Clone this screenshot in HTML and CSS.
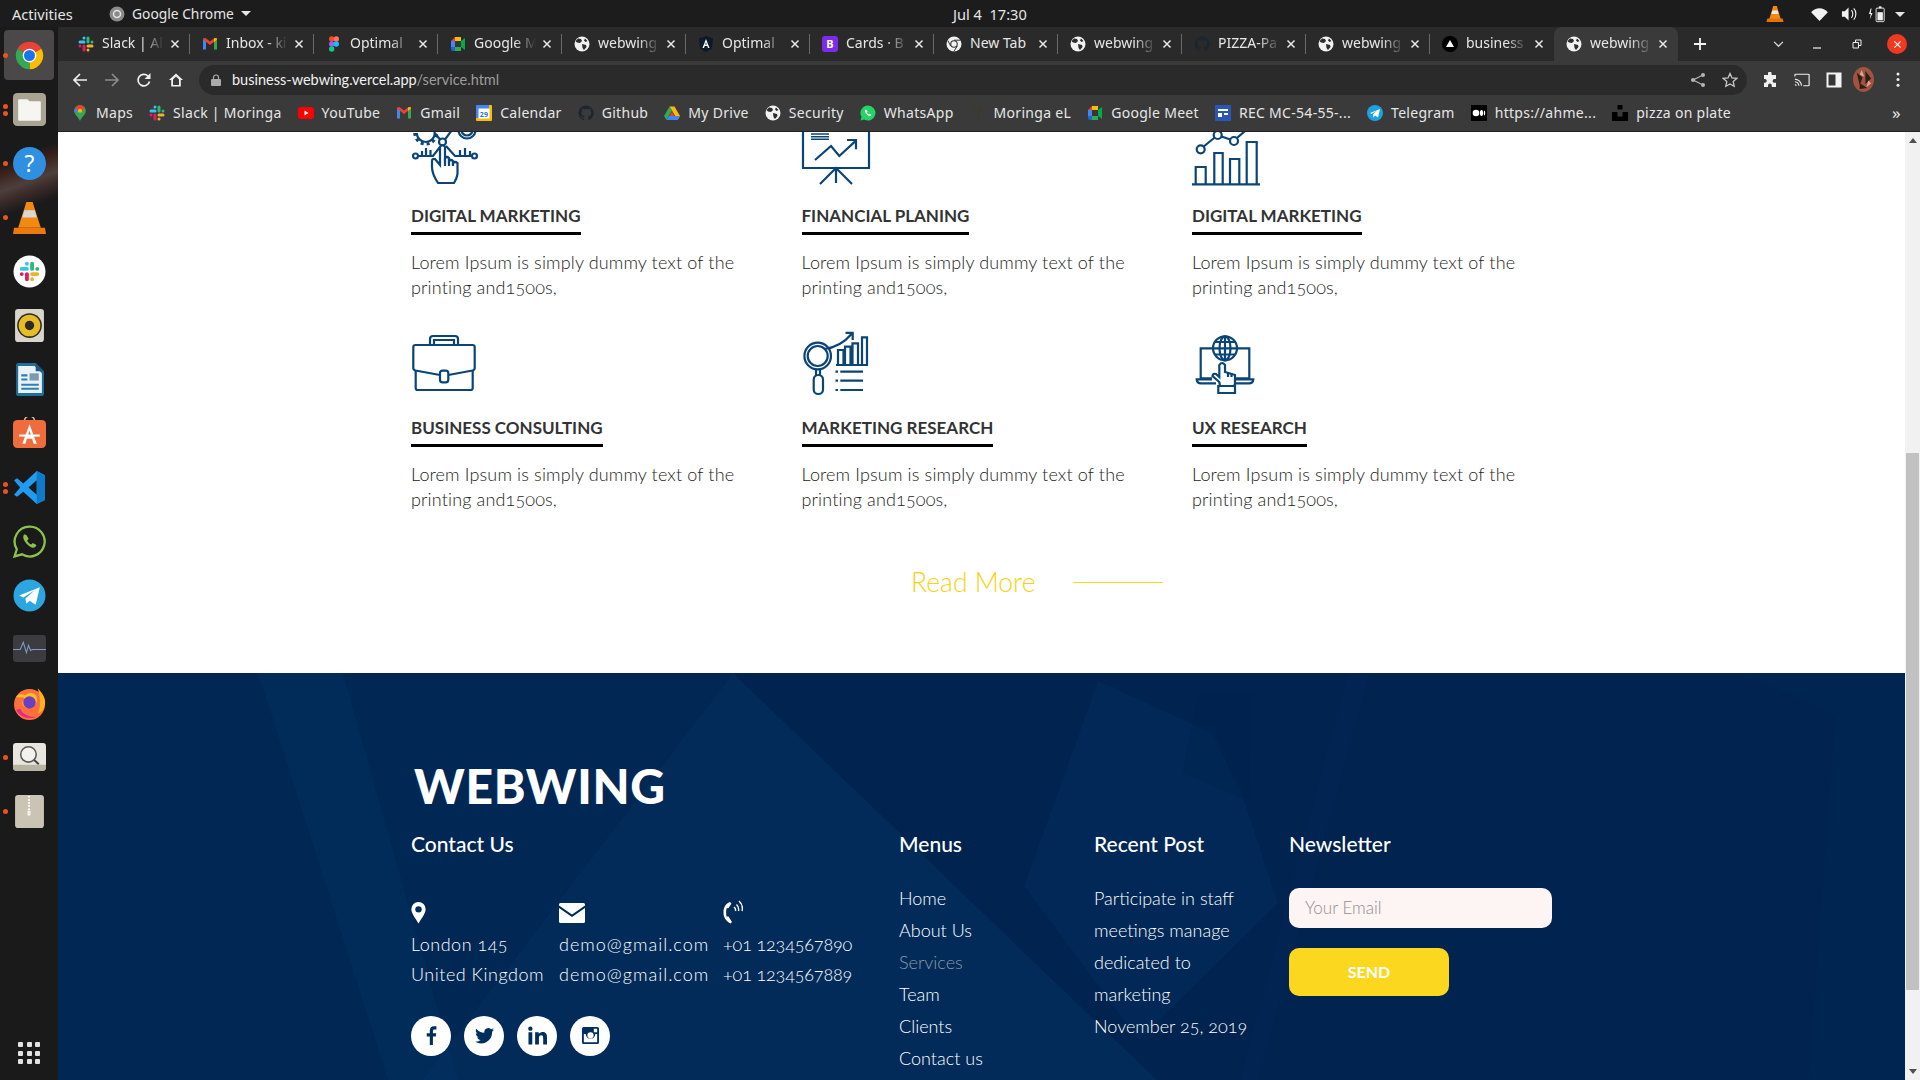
FILE: index.html
```html
<!DOCTYPE html>
<html lang="en">
<head>
    <meta charset="UTF-8">
    <title>Webwing - Services</title>
    <link rel="stylesheet" href="styles.css">
</head>
<body>
    <!-- shared icons -->
    <svg class="defs" width="0" height="0">
        <symbol id="i-x" viewBox="0 0 10 10"><path d="M1.5 1.5l7 7M8.5 1.5l-7 7" stroke="#e8e8e8" stroke-width="1.5" fill="none"/></symbol>
        <symbol id="i-globe" viewBox="0 0 16 16"><circle cx="8" cy="8" r="7.5" fill="#f1f1f1"/><path d="M4 2.500l3 .5 1 2-2 2-3-.5-1.500-1.500zM8 8l4 1 .5 2-2.500 3-1.500-2zM11 2.500l2.500 2.500-2 1-1.500-1.500z" fill="#2b2b2b"/></symbol>
        <symbol id="i-slack" viewBox="0 0 16 16"><g fill="none" stroke-width="3" stroke-linecap="round"><path d="M2 6h4M6 2h.01" stroke="#36c5f0"/><path d="M10 2v4M14 6h.01" stroke="#2eb67d"/><path d="M10 10h4M10 14h.01" stroke="#ecb22e"/><path d="M6 10v4M2 10h.01" stroke="#e01e5a"/></g></symbol>
        <symbol id="i-gmail" viewBox="0 0 16 16"><path d="M1 3.500h3v10H1z" fill="#4285f4"/><path d="M12 3.500h3v10h-3z" fill="#34a853"/><path d="M1 3.500L8 9l7-5.500v-1L12.500 2 8 5.500 3.500 2 1 2.500z" fill="#ea4335"/><path d="M12 6l3-2.500V2.500L12.500 2 12 3z" fill="#fbbc04"/></symbol>
        <symbol id="i-figma" viewBox="0 0 16 16"><circle cx="5.700" cy="3" r="2.700" fill="#f24e1e"/><circle cx="10.300" cy="3" r="2.700" fill="#ff7262"/><circle cx="5.700" cy="8" r="2.700" fill="#a259ff"/><circle cx="10.300" cy="8" r="2.700" fill="#1abcfe"/><circle cx="5.700" cy="13" r="2.700" fill="#0acf83"/></symbol>
        <symbol id="i-meet" viewBox="0 0 16 16"><path d="M1 5l4-4h6v4H5v6H1z" fill="#ea4335"/><path d="M5 1h6v4H5z" fill="#fbbc04"/><path d="M1 5h4v6H1z" fill="#4285f4"/><path d="M1 11h4v4H3a2 2 0 0 1-2-2z" fill="#1967d2"/><path d="M5 11h6v4H5z" fill="#34a853"/><path d="M11 5l4-3v12l-4-3z" fill="#00ac47"/><path d="M5 5h6v6H5z" fill="#363636"/></symbol>
        <symbol id="i-github" viewBox="0 0 16 16"><path d="M8 .5a7.500 7.500 0 0 0-2.400 14.600c.4.100.5-.2.500-.4v-1.400c-2.100.5-2.500-1-2.500-1-.4-.9-.8-1.100-.8-1.100-.7-.5.100-.5.100-.5.800.1 1.200.8 1.200.8.700 1.200 1.800.8 2.300.6.100-.5.300-.8.500-1-1.700-.2-3.400-.8-3.400-3.700 0-.8.300-1.500.8-2-.1-.2-.3-1 .1-2 0 0 .6-.2 2.100.8a7 7 0 0 1 3.800 0c1.500-1 2.100-.8 2.100-.8.400 1 .2 1.800.1 2 .5.500.8 1.200.8 2 0 2.900-1.800 3.500-3.400 3.700.3.200.5.700.5 1.400v2.100c0 .2.100.5.500.4A7.500 7.500 0 0 0 8 .5z" fill="#1b2630"/></symbol>
        <symbol id="i-chrome" viewBox="0 0 48 48"><path d="M24 24L6.680 14A20 20 0 0 1 41.320 14z" fill="#ea4335"/><path d="M24 24L41.320 14A20 20 0 0 1 24 44z" fill="#fbbc04"/><path d="M24 24V44A20 20 0 0 1 6.680 14z" fill="#34a853"/><circle cx="24" cy="24" r="10" fill="#fff"/><circle cx="24" cy="24" r="8" fill="#1a73e8"/></symbol>
        <symbol id="i-chrome-mono" viewBox="0 0 16 16"><circle cx="8" cy="8" r="7.500" fill="#f1f1f1"/><circle cx="8" cy="8" r="3.800" fill="#333"/><circle cx="8" cy="8" r="2.700" fill="#f1f1f1"/><path d="M8 4.200h6.500M4.700 10l-2.900-5.500M11.300 10l-3.500 5.500" stroke="#333" stroke-width="1"/></symbol>
        <symbol id="i-tri" viewBox="0 0 16 16"><circle cx="8" cy="8" r="8" fill="#000"/><path d="M8 4l4 7H4z" fill="#fff"/></symbol>
        <symbol id="f-pin" viewBox="0 0 16 24"><path d="M8 0a7.800 7.800 0 0 0-7.800 7.800C.2 12.500 5 18 8 23.500c3-5.500 7.800-11 7.800-15.700A7.800 7.800 0 0 0 8 0z" fill="#fff"/><circle cx="8" cy="8" r="3.500" fill="#002e5f"/></symbol>
    </svg>

    <div class="topbar">
        <span class="activities">Activities</span>
        <span class="app-menu">
            <svg class="app-ico" viewBox="0 0 16 16"><circle cx="8" cy="8" r="7.500" fill="#8a8a8a"/><circle cx="8" cy="8" r="3.500" fill="none" stroke="#e4e4e4" stroke-width="1.500"/></svg>
            Google Chrome
            <i class="caret"></i>
        </span>
        <span class="clock">Jul 4&nbsp;&nbsp;17:30</span>
        <span class="tray">
            <svg class="tray-vlc" viewBox="0 0 20 20"><path d="M8 1h4l4.500 15H3.500z" fill="#f08a10"/><path d="M7 6h6l1 4H6z" fill="#e8e8e8"/><path d="M1.500 15h17l1 4H.5z" fill="#e5720c"/></svg>
            <svg class="tray-wifi" viewBox="0 0 18 14"><path d="M9 14L0 4.500C5-1 13-1 18 4.500z" fill="#f2f2f2"/></svg>
            <svg class="tray-vol" viewBox="0 0 18 16"><path d="M1 5h3l4-4v14l-4-4H1z" fill="#f2f2f2"/><path d="M11 4c2 2 2 6 0 8M13.500 2c3 3 3 9 0 12" fill="none" stroke="#f2f2f2" stroke-width="1.200"/></svg>
            <svg class="tray-bat" viewBox="0 0 20 18"><path d="M3 3L1 9h2l-1 6 3-7H3l1-5z" fill="#f2f2f2"/><rect x="9" y="2.500" width="9" height="15" rx="1" fill="none" stroke="#f2f2f2"/><rect x="12" y="0.500" width="3" height="2" fill="#f2f2f2"/><rect x="10.500" y="7" width="6" height="9" fill="#f2f2f2"/></svg>
            <i class="caret"></i>
        </span>
    </div>

    <div class="desk">
        <div class="dock">
            <div class="dock-item active"><i class="dot d1"></i><svg class="di" viewBox="0 0 48 48"><use href="#i-chrome"/></svg></div>
            <div class="dock-item"><i class="dot d2a"></i><i class="dot d2b"></i><svg class="di" viewBox="0 0 32 32"><rect width="32" height="32" rx="4" fill="#a9a393"/><path d="M5 7a1 1 0 0 1 1-1h8l2 2h10a1 1 0 0 1 1 1v17a1 1 0 0 1-1 1H6a1 1 0 0 1-1-1z" fill="#f6f5f1"/></svg></div>
            <div class="dock-item"><i class="dot d1"></i><svg class="di" viewBox="0 0 32 32"><circle cx="16" cy="16" r="16" fill="#2f8fe0"/><text x="16" y="24" class="help-mark">?</text></svg></div>
            <div class="dock-item"><i class="dot d1"></i><svg class="di" viewBox="0 0 32 32"><path d="M13 1h6l8 25H5z" fill="#f28a12"/><path d="M11 9h10l2 7H9z" fill="#d8d8d8"/><path d="M1 26h30l1 6H0z" fill="#ec7a10"/></svg></div>
            <div class="dock-item"><svg class="di" viewBox="0 0 32 32"><circle cx="16" cy="16" r="15.500" fill="#fff"/><svg x="6" y="6" width="20" height="20" viewBox="0 0 16 16"><use href="#i-slack"/></svg></svg></div>
            <div class="dock-item"><svg class="di" viewBox="0 0 32 32"><rect x="2" width="28" height="32" rx="3" fill="#d9d5ca"/><circle cx="16" cy="16" r="12" fill="#2e2a20"/><circle cx="16" cy="16" r="10.500" fill="#e6bd25"/><circle cx="16" cy="16" r="4.500" fill="#2e2a20"/></svg></div>
            <div class="dock-item"><svg class="di" viewBox="0 0 32 32"><path d="M3 2a2 2 0 0 1 2-2h17l8 8v22a2 2 0 0 1-2 2H5a2 2 0 0 1-2-2z" fill="#1f6f9e"/><path d="M5 3h16l7 7v19H5z" fill="#eaf2f6"/><path d="M22 0l8 8h-8z" fill="#1d5a80"/><path d="M8 11h6v2H8zM8 15h6v2H8zM8 20h17v2H8zM8 24h17v2H8z" fill="#2a7fb8"/><path d="M16 10h9v7h-9z" fill="#7a9ab0"/></svg></div>
            <div class="dock-item"><svg class="di" viewBox="0 2 32 32"><path d="M11 6a5 5 0 0 1 10 0" fill="none" stroke="#d9b98a" stroke-width="1.500"/><rect y="5" width="32" height="27" rx="4" fill="#ef6d3c"/><path d="M16 9l-7 19h3l1.500-5h5l1.500 5h3zM14.500 20l1.500-5 1.500 5z" fill="#fff"/><path d="M6 19h20v2H6z" fill="#fff"/></svg></div>
            <div class="dock-item"><i class="dot d2a"></i><i class="dot d2b"></i><svg class="di" viewBox="0 0 32 32"><path d="M23 0l8 4v24l-8 4-13-12-6 5-3-2 6-7-6-7 3-2 6 5z" fill="#1f9cf0"/><path d="M23 9l-8 7 8 7z" fill="#1b1a1a"/><path d="M23 0l8 4v24l-8 4z" fill="#0f7ac8"/></svg></div>
            <div class="dock-item"><svg class="di" viewBox="0 0 32 32"><path d="M16 1.500a14.500 14.500 0 0 0-12.300 22L1.500 30.500l7.200-2.100A14.500 14.500 0 1 0 16 1.500z" fill="#1b1a1a" stroke="#8bc34a" stroke-width="2.200"/><path d="M11 9c-1.500 1.500-1.500 4 .5 7s5 5.500 7.500 6c2 .3 3.500-1 3.700-2.500l-3.500-2-1.500 1.500c-1.500-.5-3.500-2.500-4-4l1.500-1.500-2-3.500z" fill="#8bc34a"/></svg></div>
            <div class="dock-item"><svg class="di" viewBox="0 0 32 32"><circle cx="16" cy="16" r="15.500" fill="#2ca5e0"/><path d="M6 16l20-8-4 17-6-4-3 3-1-5 9-8-11 7z" fill="#fff"/></svg></div>
            <div class="dock-item"><svg class="di" viewBox="0 0 32 28"><rect width="32" height="26" rx="3" fill="#3c3c40"/><path d="M0 14h7l3-7 3 10 2-7 2 5 2-1h13" fill="none" stroke="#7f9ccc" stroke-width="1"/></svg></div>
            <div class="dock-item"><svg class="di" viewBox="0 0 32 32"><circle cx="16" cy="17" r="15" fill="#ff7139"/><path d="M24 1c4 5 8 9 7 16-1 5-4 8-7 9 3-6 3-14 0-25z" fill="#ffb31a"/><path d="M3 10C5 6 9 7 12 8c3-3 8-3 10 0 3 4 1 11-6 12-4 .5-7-2-7-5 1-2 3-2 4-2l-3-3c-2 0-4 0-7 0z" fill="#f8c022"/><circle cx="16" cy="15" r="6" fill="#6a3fc4"/><path d="M3 22c3 6 11 10 19 7-7 0-13-3-15-8z" fill="#e5278f"/></svg></div>
            <div class="dock-item"><i class="dot d1"></i><svg class="di" viewBox="0 0 32 28"><rect width="32" height="26.500" rx="3" fill="#e8e6df"/><path d="M0 21h32v3a3 3 0 0 1-3 3H3a3 3 0 0 1-3-3z" fill="#b8b4a4"/><circle cx="15" cy="11" r="7.500" fill="#f3f2ee" stroke="#5b5b5b" stroke-width="1.500"/><path d="M20.500 16.500l4.500 4" stroke="#444" stroke-width="2"/></svg></div>
            <div class="dock-item"><i class="dot d1"></i><svg class="di" viewBox="0 0 28 32"><rect width="28" height="32" rx="3" fill="#c9c4b4"/><path d="M13.500 1v15" stroke="#fff" stroke-width="2" stroke-dasharray="1.500 1.500"/><rect x="12" y="15" width="3" height="5" rx="1" fill="#f3f1ea"/></svg></div>
            <div class="dock-spacer"></div>
            <div class="app-grid"><i></i><i></i><i></i><i></i><i></i><i></i><i></i><i></i><i></i></div>
        </div>

        <div class="window">
            <div class="tabstrip">
                <div class="tab"><svg class="fav"><use href="#i-slack"/></svg><span class="tab-title">Slack | Al</span><svg class="tab-x"><use href="#i-x"/></svg></div>
                <div class="tab"><svg class="fav"><use href="#i-gmail"/></svg><span class="tab-title">Inbox - ki</span><svg class="tab-x"><use href="#i-x"/></svg></div>
                <div class="tab"><svg class="fav"><use href="#i-figma"/></svg><span class="tab-title">Optimal</span><svg class="tab-x"><use href="#i-x"/></svg></div>
                <div class="tab"><svg class="fav"><use href="#i-meet"/></svg><span class="tab-title">Google M</span><svg class="tab-x"><use href="#i-x"/></svg></div>
                <div class="tab"><svg class="fav"><use href="#i-globe"/></svg><span class="tab-title">webwing</span><svg class="tab-x"><use href="#i-x"/></svg></div>
                <div class="tab"><svg class="fav" viewBox="0 0 16 16"><path d="M8 0l7 2.500-1 10L8 16l-6-3.500-1-10z" fill="#0c1a2a"/><path d="M8 3l3.500 9h-1.500l-.7-2H6.700L6 12H4.500zM7.200 8.500h1.600L8 6.300z" fill="#fff"/></svg><span class="tab-title">Optimal</span><svg class="tab-x"><use href="#i-x"/></svg></div>
                <div class="tab"><svg class="fav" viewBox="0 0 16 16"><rect width="16" height="16" rx="3" fill="#7c2bea"/><text x="8" y="12" class="boot-mark">B</text></svg><span class="tab-title">Cards · B</span><svg class="tab-x"><use href="#i-x"/></svg></div>
                <div class="tab"><svg class="fav"><use href="#i-chrome-mono"/></svg><span class="tab-title nofade">New Tab</span><svg class="tab-x"><use href="#i-x"/></svg></div>
                <div class="tab"><svg class="fav"><use href="#i-globe"/></svg><span class="tab-title">webwing</span><svg class="tab-x"><use href="#i-x"/></svg></div>
                <div class="tab"><svg class="fav"><use href="#i-github"/></svg><span class="tab-title">PIZZA-Pa</span><svg class="tab-x"><use href="#i-x"/></svg></div>
                <div class="tab"><svg class="fav"><use href="#i-globe"/></svg><span class="tab-title">webwing</span><svg class="tab-x"><use href="#i-x"/></svg></div>
                <div class="tab pre-active"><svg class="fav"><use href="#i-tri"/></svg><span class="tab-title">business</span><svg class="tab-x"><use href="#i-x"/></svg></div>
                <div class="tab active"><svg class="fav"><use href="#i-globe"/></svg><span class="tab-title">webwing</span><svg class="tab-x"><use href="#i-x"/></svg></div>
                <svg class="new-tab" viewBox="0 0 12 12"><path d="M6 0v12M0 6h12" stroke="#f2f2f2" stroke-width="1.800"/></svg>
                <div class="win-controls">
                    <svg class="wc wc-chev" viewBox="0 0 12 8"><path d="M1 1l5 5 5-5" fill="none" stroke="#d8d8d8" stroke-width="1.500"/></svg>
                    <svg class="wc wc-min" viewBox="0 0 10 10"><path d="M1 9h8" stroke="#eee" stroke-width="1.200"/></svg>
                    <svg class="wc wc-max" viewBox="0 0 10 10"><path d="M1 3.500h5.500V9H1zM3.500 3.500V1H9v5.500H6.500" fill="none" stroke="#eee"/></svg>
                    <span class="wc-close"><svg viewBox="0 0 10 10"><path d="M1.500 1.500l7 7M8.500 1.500l-7 7" stroke="#fff" stroke-width="1.300"/></svg></span>
                </div>
            </div>

            <div class="toolbar">
                <div class="nav-btns">
                    <svg viewBox="0 0 16 16"><path d="M15 8H2M8 2L2 8l6 6" fill="none" stroke="#f0f0f0" stroke-width="1.700"/></svg>
                    <svg viewBox="0 0 16 16"><path d="M1 8h13M8 2l6 6-6 6" fill="none" stroke="#8b8b8b" stroke-width="1.700"/></svg>
                    <svg viewBox="0 0 16 16"><path d="M13.500 9.500A5.800 5.800 0 1 1 12 4" fill="none" stroke="#f0f0f0" stroke-width="1.700"/><path d="M14.500 1v6h-6z" fill="#f0f0f0"/></svg>
                    <svg viewBox="0 0 16 16"><path d="M8 1.500L1 8h2.200v6.500h9.600V8H15zM5 13V7.500l3-3 3 3V13z" fill="#f0f0f0" fill-rule="evenodd"/></svg>
                </div>
                <div class="omnibox">
                    <svg class="lock" viewBox="0 0 10 12"><path d="M2.500 5V3.500a2.500 2.500 0 0 1 5 0V5" fill="none" stroke="#aaa" stroke-width="1.200"/><rect y="5" width="10" height="7" rx="1" fill="#aaa"/></svg>
                    <span class="url">business-webwing.vercel.app<span class="url-path">/service.html</span></span>
                    <svg class="omni-ico" viewBox="0 0 16 16"><circle cx="13" cy="3" r="2" fill="#b5b5b5"/><circle cx="3" cy="8" r="2" fill="#b5b5b5"/><circle cx="13" cy="13" r="2" fill="#b5b5b5"/><path d="M13 3L3 8l10 5" fill="none" stroke="#b5b5b5" stroke-width="1.200"/></svg>
                    <svg class="omni-ico star" viewBox="0 0 16 16"><path d="M8 1.500l2 4.400 4.800.5-3.600 3.200 1 4.700L8 11.900 3.800 14.300l1-4.700L1.200 6.400 6 5.900z" fill="none" stroke="#c8c8c8" stroke-width="1.300"/></svg>
                </div>
                <div class="tool-right">
                    <svg viewBox="0 0 16 16"><path d="M6 1.500a1.800 1.800 0 0 1 3.600 0V3H14v4h-1.500a1.900 1.900 0 0 0 0 3.800H14V15H9.800v-1.500a1.900 1.900 0 0 0-3.800 0V15H2v-4.300h1.300a1.900 1.900 0 0 0 0-3.700H2V3h4z" fill="#f0f0f0"/></svg>
                    <svg viewBox="0 0 18 16"><path d="M1 4V2.500a1 1 0 0 1 1-1h14a1 1 0 0 1 1 1v11a1 1 0 0 1-1 1h-5.500" fill="none" stroke="#f0f0f0" stroke-width="1.300"/><path d="M1 7a8 8 0 0 1 7.500 7.500M1 10a5 5 0 0 1 4.500 4.500M1 13a2 2 0 0 1 1.500 1.500" fill="none" stroke="#f0f0f0" stroke-width="1.300"/></svg>
                    <svg viewBox="0 0 16 16"><path d="M1.500 1.500h13v13h-13z" fill="#363636" stroke="#f4f4f4" stroke-width="2"/><path d="M9.500 1.500h5v13h-5z" fill="#f4f4f4"/></svg>
                    <svg class="avatar" viewBox="0 0 22 26"><ellipse cx="11" cy="13" rx="11" ry="13" fill="#a0533f"/><path d="M4 6l6 5-3 8zM13 4l6 8-6 6zM7 17l8 5-8 1z" fill="#2d1d1b"/><path d="M9 3l3 7-5-2zM16 14l3 3-5 4z" fill="#e2a58e"/></svg>
                    <svg class="kebab" viewBox="0 0 4 16"><circle cx="2" cy="2" r="1.600" fill="#f0f0f0"/><circle cx="2" cy="8" r="1.600" fill="#f0f0f0"/><circle cx="2" cy="14" r="1.600" fill="#f0f0f0"/></svg>
                </div>
            </div>

            <div class="bookmarks">
                <span class="bm"><svg viewBox="0 0 16 16"><path d="M8 0a5.800 5.800 0 0 0-5.800 5.800C2.200 9.500 6 11.500 8 16c2-4.500 5.800-6.500 5.800-10.200A5.800 5.800 0 0 0 8 0z" fill="#34a853"/><path d="M3 3a5.800 5.800 0 0 1 10 0L8 8z" fill="#ea4335"/><path d="M3 3L2.200 7 8 8z" fill="#4285f4"/><circle cx="8" cy="5.800" r="2" fill="#fbbc04"/></svg>Maps</span>
                <span class="bm"><svg><use href="#i-slack"/></svg>Slack | Moringa</span>
                <span class="bm"><svg viewBox="0 0 16 16"><rect y="2" width="16" height="12" rx="3" fill="#f00"/><path d="M6.500 5.500l4 2.500-4 2.500z" fill="#fff"/></svg>YouTube</span>
                <span class="bm"><svg><use href="#i-gmail"/></svg>Gmail</span>
                <span class="bm"><svg viewBox="0 0 16 16"><rect width="16" height="16" rx="1" fill="#fbbc04"/><rect width="13" height="13" fill="#4285f4"/><rect x="2.500" y="3.500" width="11" height="10" fill="#fff"/><text x="8" y="11.500" class="cal-mark">29</text></svg>Calendar</span>
                <span class="bm"><svg><use href="#i-github"/></svg>Github</span>
                <span class="bm"><svg viewBox="0 0 16 16"><path d="M5.500 1.500h5L16 11l-2.500 4z" fill="#fbbc04"/><path d="M5.500 1.500L0 11l2.500 4L8 5.700z" fill="#34a853"/><path d="M2.500 15h11L16 11H5z" fill="#4285f4"/><path d="M5.500 11L8 6.500l2.500 4.500z" fill="#ea4335"/></svg>My Drive</span>
                <span class="bm"><svg><use href="#i-globe"/></svg>Security</span>
                <span class="bm"><svg viewBox="0 0 16 16"><path d="M8 .5a7.500 7.500 0 0 0-6.400 11.400L.5 15.500l3.700-1A7.500 7.500 0 1 0 8 .5z" fill="#25d366"/><path d="M5.500 4.500c-.8.800-.8 2 .2 3.500s2.500 2.800 3.800 3.100c1 .2 1.800-.5 1.900-1.300l-1.800-1-.7.700c-.8-.3-1.800-1.200-2-2l.7-.8-1-1.800z" fill="#fff"/></svg>WhatsApp</span>
                <span class="bm"><svg viewBox="0 0 16 16"><path d="M8 16V7M8 8L3 4M8 8l5-4M8 6L5 1M8 6l3-5" stroke="#3d3a2c" stroke-width="1.500" fill="none"/></svg>Moringa eL</span>
                <span class="bm"><svg><use href="#i-meet"/></svg>Google Meet</span>
                <span class="bm"><svg viewBox="0 0 16 16"><rect width="16" height="16" fill="#2a56b8"/><path d="M3 4h10v2H3zM3 8h4v4H3zM9 8h4v2H9z" fill="#fff"/></svg>REC MC-54-55-...</span>
                <span class="bm"><svg viewBox="0 0 16 16"><circle cx="8" cy="8" r="8" fill="#1da1e2"/><path d="M3 8l10-4-2 8.500-3-2-1.500 2-.5-3 4-4-5.500 3.500z" fill="#fff"/></svg>Telegram</span>
                <span class="bm"><svg viewBox="0 0 16 16"><rect width="16" height="16" fill="#000"/><circle cx="5" cy="8" r="3.300" fill="#fff"/><ellipse cx="10.500" cy="8" rx="1.600" ry="3" fill="#fff"/><ellipse cx="13.500" cy="8" rx=".7" ry="2.600" fill="#fff"/></svg>https://ahme...</span>
                <span class="bm"><svg viewBox="0 0 16 16"><path d="M5.500 0h5v4.500h-5zM0 7h5.500v4.500h5V7H16v9H0z" fill="#000"/></svg>pizza on plate</span>
                <span class="bm-more">»</span>
            </div>

            <div class="viewport">
                <div class="page">
                    <section class="services">
                        <div class="service">
                            <div class="service-icon">
                                <svg viewBox="0 0 70 66">
                                    <g class="ln">
                                        <path d="M5.800 13a9 9 0 0 0 18 0M47.500 10a8.500 8.500 0 0 0 17 0M50.500 10a5.500 5.500 0 0 0 11 0"/>
                                        <path class="teeth" d="M3.800 13a11 11 0 0 0 22 0"/>
                                        <path d="M27 63Q21 54 21 47V41Q21 38.500 24 39L29 45V27Q31.500 23 34 27V38Q36 36 38 38V41Q40 39 42 41V43Q44 41 46.500 43V54Q46 58 43 63Z"/>
                                        <circle cx="31.500" cy="22" r="3.500"/>
                                        <path d="M29 19.500L23 12M34 19.500L41 10"/>
                                        <circle cx="4.500" cy="36" r="2.500"/><circle cx="63.500" cy="36" r="2.500"/>
                                        <path d="M7 36H22L29 27M61 36H44L35 26M11 36v-5M15 36v-8M19.500 36v-6M49 36v-6M54 36v-8M59 36v-5"/>
                                        <path d="M34 38v8M38 38v8M42 41v5"/>
                                    </g>
                                </svg>
                            </div>
                            <h4 class="service-title">DIGITAL MARKETING</h4>
                            <p class="service-text">Lorem Ipsum is simply dummy text of the printing and1500s,</p>
                        </div>
                        <div class="service">
                            <div class="service-icon">
                                <svg viewBox="0 0 70 66">
                                    <g class="ln">
                                        <path d="M1 0H67V48H1Z"/>
                                        <path d="M9 14H27M9 16.700H27M9 19.300H27" stroke-width="1.500"/>
                                        <path d="M13 40L29 26L37.300 36L54 20.600M45 20H54V29.300"/>
                                        <path d="M18 64L34 48L50 64M34 48V63"/>
                                    </g>
                                </svg>
                            </div>
                            <h4 class="service-title">FINANCIAL PLANING</h4>
                            <p class="service-text">Lorem Ipsum is simply dummy text of the printing and1500s,</p>
                        </div>
                        <div class="service">
                            <div class="service-icon">
                                <svg viewBox="0 0 70 66">
                                    <g class="ln">
                                        <path d="M0 64.300H68"/>
                                        <path d="M3.700 64V47H13.700V64M22.300 64V33H30.700V64M38 64V39H47.300V64M54.700 64V22H64.700V64"/>
                                        <circle cx="8.700" cy="29.300" r="4"/><circle cx="25.700" cy="15" r="4"/><circle cx="42" cy="21" r="4"/>
                                        <path d="M11.700 26.500L22.700 17.500M29.500 16.500L38.300 19.500M45 18L53 11"/>
                                    </g>
                                </svg>
                            </div>
                            <h4 class="service-title">DIGITAL MARKETING</h4>
                            <p class="service-text">Lorem Ipsum is simply dummy text of the printing and1500s,</p>
                        </div>
                        <div class="service">
                            <div class="service-icon">
                                <svg viewBox="0 0 70 66">
                                    <g class="ln">
                                        <path d="M19 13V7Q19 4 22 4H44Q47 4 47 7V13M23 13V8H43V13"/>
                                        <path d="M29 43L4.500 38.500Q2.300 38 2.300 36V15Q2.300 13 4.500 13H61.500Q63.700 13 63.700 15V36Q63.700 38 61.500 38.500L37.300 43"/>
                                        <path d="M4.700 39V56Q4.700 58 6.700 58H59.700Q61.700 58 61.700 56V39"/>
                                        <rect x="29" y="38.700" width="8.300" height="11.600" rx="2.500"/>
                                    </g>
                                </svg>
                            </div>
                            <h4 class="service-title">BUSINESS CONSULTING</h4>
                            <p class="service-text">Lorem Ipsum is simply dummy text of the printing and1500s,</p>
                        </div>
                        <div class="service">
                            <div class="service-icon">
                                <svg viewBox="0 0 70 66">
                                    <g class="ln">
                                        <circle cx="15.700" cy="24" r="13.300"/><circle cx="15.700" cy="24" r="10"/>
                                        <path d="M14 37.500V43M18 37.500V43"/>
                                        <rect x="11.700" y="43" width="9.300" height="19" rx="4.600"/>
                                        <path d="M34 33H65V5.300H60V33M36 33V18H41.500V33M43 33V14.700H48.500V33M50.500 33V11.300H56V33"/>
                                        <path d="M22 17C32 16 42 11 50 1.500M43.500 .8H50.700V8"/>
                                        <path d="M38.300 39.700H61M38.300 48.700H61M38.300 58H61"/>
                                        <path d="M33.500 39.700H36M33.500 48.700H36M33.500 58H36"/>
                                    </g>
                                </svg>
                            </div>
                            <h4 class="service-title">MARKETING RESEARCH</h4>
                            <p class="service-text">Lorem Ipsum is simply dummy text of the printing and1500s,</p>
                        </div>
                        <div class="service">
                            <div class="service-icon">
                                <svg viewBox="0 0 70 66">
                                    <g class="ln">
                                        <path d="M21 16.300H8.700V46.300H20M45 16.300H57.300V46.300H44"/>
                                        <path d="M20 47.300H4.700Q5 51.300 9 51.300H24M44 47.300H61.300Q61 51.300 57 51.300H43"/>
                                        <circle cx="33" cy="16.300" r="12"/>
                                        <ellipse cx="33" cy="16.300" rx="5.500" ry="12"/>
                                        <path d="M21 16.300H45M23 10H43M23 22.500H43M33 4.300V28.300"/>
                                        <path d="M27.300 50L20.500 44Q21 41 24 42L27.300 45V33Q30 29 33 33V40L43 43V52L42 54H28Z" fill="#fff"/>
                                        <path d="M26.300 54H43V61H26.300Z"/>
                                        <path d="M36 40V45M39.500 41V45"/>
                                    </g>
                                </svg>
                            </div>
                            <h4 class="service-title">UX RESEARCH</h4>
                            <p class="service-text">Lorem Ipsum is simply dummy text of the printing and1500s,</p>
                        </div>
                    </section>
                    <a class="read-more">Read More <i class="read-line"></i></a>

                    <footer class="footer">
                        <!-- faded photo behind the footer -->
                        <svg class="footer-bg" viewBox="0 0 1847 407" preserveAspectRatio="none">
                            <path d="M0 0H675L364 407H0Z" fill="#0a4a86" opacity=".1"/>
                            <path d="M200 0H285L400 407H330Z" fill="#0a4a86" opacity=".1"/>
                            <path d="M675 0L1099 407H364Z" fill="#0a4a86" opacity=".2"/>
                            <path d="M1040 8L1155 60L1187 130L1220 230L1081 367L966 213Z" fill="#0a4a86" opacity=".14"/>
                            <path d="M1140 20H1195L1190 127L1125 100Z" fill="#00234f" opacity=".35"/>
                            <path d="M1290 0H1312L1200 407H1182Z" fill="#0a4a86" opacity=".06"/>
                            <path d="M1683 0L1777 43L1750 407H1847V0Z" fill="#0a4a86" opacity=".05"/>
                        </svg>
                        <div class="footer-inner">
                            <div class="logo">WEBWING</div>
                            <div class="footer-cols">
                                <div class="contact">
                                    <h5 class="footer-head">Contact Us</h5>
                                    <div class="contact-grid">
                                        <div class="contact-col c1">
                                            <svg class="ci ci-pin"><use href="#f-pin"/></svg>
                                            <p>London 145</p>
                                            <p>United Kingdom</p>
                                        </div>
                                        <div class="contact-col c2">
                                            <svg class="ci ci-mail" viewBox="0 0 26 20"><path d="M1.500 0h23A1.500 1.500 0 0 1 26 1.500v.9L13 11.500 0 2.400v-.9A1.500 1.500 0 0 1 1.500 0z" fill="#fff"/><path d="M0 5l13 9 13-9v13.500a1.500 1.500 0 0 1-1.500 1.500h-23A1.500 1.500 0 0 1 0 18.500z" fill="#fff"/></svg>
                                            <p>demo@gmail.com</p>
                                            <p>demo@gmail.com</p>
                                        </div>
                                        <div class="contact-col c3">
                                            <svg class="ci ci-phone" viewBox="0 0 20 24"><path d="M7 2C2 4 .5 8 .5 12.500C.5 17 2.500 21 7.500 23.500L9 22L5.500 16.500L3.500 16.500C3 14 3 11 3.500 8.500L5.500 8L8.500 3.500Z" fill="#fff"/><path d="M11 7a4 4 0 0 1 1.500 4M13.500 4.500a7 7 0 0 1 2 6.500M16 1a10 10 0 0 1 3 10" fill="none" stroke="#fff" stroke-width="1.400"/></svg>
                                            <p>+01 1234567890</p>
                                            <p>+01 1234567889</p>
                                        </div>
                                    </div>
                                    <div class="socials">
                                        <span class="social"><svg viewBox="0 0 20 20"><path d="M11.500 20v-9h3l.5-3.500h-3.500V5.300c0-1 .3-1.700 1.800-1.700H15.200V.5C14.800.4 13.800.3 12.600.3 10 .3 8.200 1.900 8.200 4.800v2.700H5V11h3.200v9z"/></svg></span>
                                        <span class="social"><svg viewBox="0 0 20 20"><path d="M20 4c-.7.300-1.500.5-2.300.6.800-.5 1.500-1.300 1.800-2.200-.8.500-1.700.8-2.600 1A4.100 4.100 0 0 0 9.900 7.100C6.500 7 3.500 5.300 1.400 2.800c-1.100 1.900-.5 4.200 1.300 5.400-.7 0-1.300-.2-1.900-.5 0 2 1.400 3.700 3.300 4.100-.6.200-1.200.2-1.900.1.500 1.600 2 2.800 3.800 2.800A8.300 8.300 0 0 1 0 16.400 11.600 11.600 0 0 0 18 6c.8-.5 1.500-1.200 2-2z"/></svg></span>
                                        <span class="social"><svg viewBox="0 0 20 20"><path d="M.5 6.500h4v13h-4zM2.500.5a2.300 2.300 0 1 1 0 4.600 2.300 2.300 0 0 1 0-4.600zM7.500 6.500h3.800v1.800c.6-1 1.900-2.100 4-2.100 4.100 0 4.700 2.700 4.700 6.200v7.100h-4v-6.300c0-1.500 0-3.400-2.100-3.400s-2.400 1.600-2.400 3.300v6.400h-4z"/></svg></span>
                                        <span class="social"><svg viewBox="0 0 20 20"><path d="M3 1h14a2 2 0 0 1 2 2v14a2 2 0 0 1-2 2H3a2 2 0 0 1-2-2V3a2 2 0 0 1 2-2zm10.500 2v3.500H17V3zM3 8.500V17h14V8.500h-2A5 5 0 1 1 5 8.500zM10 6.500a3.300 3.300 0 1 0 0 6.600 3.300 3.300 0 0 0 0-6.600z" fill-rule="evenodd"/></svg></span>
                                    </div>
                                </div>
                                <div class="menus">
                                    <h5 class="footer-head">Menus</h5>
                                    <ul class="footer-list">
                                        <li>Home</li>
                                        <li>About Us</li>
                                        <li class="muted">Services</li>
                                        <li>Team</li>
                                        <li>Clients</li>
                                        <li>Contact us</li>
                                    </ul>
                                </div>
                                <div class="recent">
                                    <h5 class="footer-head">Recent Post</h5>
                                    <ul class="footer-list">
                                        <li>Participate in staff</li>
                                        <li>meetings manage</li>
                                        <li>dedicated to</li>
                                        <li>marketing</li>
                                        <li>November 25, 2019</li>
                                    </ul>
                                </div>
                                <div class="newsletter">
                                    <h5 class="footer-head">Newsletter</h5>
                                    <input class="email" type="text" placeholder="Your Email">
                                    <button class="send">SEND</button>
                                </div>
                            </div>
                        </div>
                    </footer>
                </div>
                <div class="scrollbar">
                    <i class="sb-up"></i>
                    <div class="sb-thumb"></div>
                    <i class="sb-down"></i>
                </div>
            </div>
        </div>
    </div>
</body>
</html>
```

FILE: styles.css
```css
* {
    box-sizing: border-box;
}
html, body {
    margin: 0;
    height: 100%;
    overflow: hidden;
}
body {
    display: flex;
    flex-direction: column;
    width: 1920px;
    height: 1080px;
    background: #1b1a1a;
    font-family: "Lato", "Noto Sans", sans-serif;
}
.defs {
    position: absolute;
}

/* gnome top bar */
.topbar {
    height: 27px;
    flex: none;
    display: flex;
    align-items: center;
    position: relative;
    background: #1c1c1c;
    color: #e6e6e6;
    font-family: "Noto Sans", sans-serif;
    font-size: 13.8px;
    padding-left: 12px;
}
.activities {
    width: 97px;
    font-size: 14.6px;
}
.app-menu {
    display: flex;
    align-items: center;
    gap: 7px;
}
.app-ico {
    width: 16px;
    height: 16px;
}
.caret {
    width: 0;
    height: 0;
    border-left: 5px solid transparent;
    border-right: 5px solid transparent;
    border-top: 5px solid #e6e6e6;
}
.clock {
    position: absolute;
    left: 953px;
    top: 4px;
    font-size: 14.6px;
}
.tray {
    position: absolute;
    right: 15px;
    top: 4px;
    display: flex;
    align-items: center;
    height: 20px;
}
.tray-vlc { width: 18px; height: 18px; margin-right: 27px; }
.tray-wifi { width: 17px; height: 13px; margin-right: 13px; }
.tray-vol { width: 17px; height: 16px; margin-right: 10px; }
.tray-bat { width: 18px; height: 18px; margin-right: 9px; }

.desk {
    flex: 1;
    display: flex;
    min-height: 0;
}

/* ubuntu dock */
.dock {
    width: 58px;
    flex: none;
    display: flex;
    flex-direction: column;
    align-items: center;
    padding-top: 3px;
    background:
        linear-gradient(160deg, transparent 42%, #3a201b 48%, #4d3f3c 58%, #3d2d2b 63%, transparent 72%) 0 60px / 100% 160px no-repeat,
        #1b1a1a;
}
.dock-item {
    width: 50px;
    height: 50px;
    margin-bottom: 4px;
    display: flex;
    align-items: center;
    justify-content: center;
    position: relative;
    border-radius: 4px;
    flex: none;
}
.dock-item.active {
    background: #4a4848;
}
.di {
    width: 33px;
    height: 33px;
}
.dot {
    position: absolute;
    left: 0;
    width: 5px;
    height: 5px;
    border-radius: 50%;
    background: #e95420;
    margin-left: -1px;
}
.d1 { top: 23px; }
.d2a { top: 20px; }
.d2b { top: 27px; }
.help-mark {
    font-family: "Noto Sans", sans-serif;
    font-size: 22px;
    fill: #fff;
    text-anchor: middle;
}
.dock-spacer {
    flex: 1;
}
.app-grid {
    display: grid;
    grid-template-columns: repeat(3, 5px);
    gap: 3.5px;
    margin-bottom: 16px;
}
.app-grid i {
    width: 5px;
    height: 5px;
    background: #e2e2e2;
    border-radius: 1px;
}

/* chrome window */
.window {
    flex: 1;
    min-width: 0;
    display: flex;
    flex-direction: column;
}
.tabstrip {
    height: 34px;
    flex: none;
    display: flex;
    align-items: stretch;
    padding-left: 8px;
    background: #2a2a2a;
    position: relative;
    color: #e6e6e6;
    font-family: "Noto Sans", sans-serif;
    font-size: 14px;
}
.tab {
    width: 124px;
    display: flex;
    align-items: center;
    padding-left: 12px;
    position: relative;
    flex: none;
}
.tab::after {
    content: "";
    position: absolute;
    right: 0;
    top: 7px;
    height: 20px;
    width: 1px;
    background: #6a6a6a;
}
.tab.pre-active::after,
.tab.active::after {
    display: none;
}
.tab.active {
    background: #3a3a3a;
    border-radius: 8px 8px 0 0;
}
.fav {
    width: 16px;
    height: 16px;
    flex: none;
    margin-right: 8px;
}
.tab-title {
    width: 62px;
    white-space: nowrap;
    flex: none;
    line-height: 1;
    padding-bottom: 2px;
    -webkit-mask-image: linear-gradient(90deg, #000 65%, transparent 100%);
    mask-image: linear-gradient(90deg, #000 65%, transparent 100%);
}
.tab-title.nofade {
    -webkit-mask-image: none;
    mask-image: none;
}
.tab-x {
    width: 10px;
    height: 10px;
    margin-left: 6px;
    flex: none;
}
.boot-mark {
    font-family: "Noto Sans", sans-serif;
    font-size: 11px;
    font-weight: 700;
    fill: #fff;
    text-anchor: middle;
}
.cal-mark {
    font-family: "Noto Sans", sans-serif;
    font-size: 7px;
    font-weight: 700;
    fill: #1a73e8;
    text-anchor: middle;
}
.new-tab {
    width: 12px;
    height: 12px;
    align-self: center;
    margin-left: 16px;
}
.win-controls {
    position: absolute;
    right: 0;
    top: 0;
    bottom: 0;
    display: flex;
    align-items: center;
}
.wc { flex: none; }
.wc-chev { width: 11px; height: 7px; margin-right: 28px; }
.wc-min { width: 10px; height: 10px; margin-right: 30px; }
.wc-max { width: 10px; height: 10px; margin-right: 25px; }
.wc-close {
    width: 20px;
    height: 20px;
    border-radius: 50%;
    background: #f0391f;
    display: flex;
    align-items: center;
    justify-content: center;
    margin-right: 13px;
}
.wc-close svg {
    width: 9px;
    height: 9px;
}

.toolbar {
    height: 38px;
    flex: none;
    display: flex;
    align-items: center;
    padding-bottom: 1px;
    background: #3a3a3a;
}
.nav-btns {
    display: flex;
    gap: 16px;
    padding-left: 14px;
    width: 141px;
    flex: none;
}
.nav-btns svg {
    width: 16px;
    height: 16px;
    flex: none;
}
.omnibox {
    width: 1548px;
    height: 30px;
    flex: none;
    border-radius: 15px;
    background: #2a2a2a;
    display: flex;
    align-items: center;
    padding-left: 12px;
    color: #f0f0f0;
    font-size: 14.5px;
}
.lock {
    width: 10px;
    height: 12px;
    margin-right: 11px;
}
.url {
    flex: 1;
}
.url-path {
    color: #9d9d9d;
}
.omni-ico {
    width: 16px;
    height: 16px;
    margin-right: 16px;
}
.omni-ico.star {
    margin-right: 9px;
}
.tool-right {
    display: flex;
    align-items: center;
    flex: 1;
    padding-left: 15px;
}
.tool-right svg {
    width: 16px;
    height: 16px;
    margin-right: 16px;
    flex: none;
}
.tool-right .avatar {
    width: 21px;
    height: 25px;
    margin-right: 22px;
    margin-left: -5px;
}
.tool-right .kebab {
    width: 4px;
    height: 15px;
    margin: 0;
}

.bookmarks {
    height: 33px;
    flex: none;
    display: flex;
    align-items: center;
    position: relative;
    padding: 0 0 5px 6px;
    background: #3a3a3a;
    border-bottom: 1px solid #232323;
    color: #e6e6e6;
    font-family: "Noto Sans", sans-serif;
    font-size: 14px;
    letter-spacing: .3px;
}
.bm {
    display: flex;
    align-items: center;
    padding: 0 8px;
    white-space: nowrap;
}
.bm svg {
    width: 16px;
    height: 16px;
    margin-right: 8px;
    flex: none;
}
.bm-more {
    position: absolute;
    right: 19px;
    top: 2px;
    font-size: 17px;
}

.viewport {
    flex: 1;
    min-height: 0;
    display: flex;
}
.page {
    flex: 1;
    min-width: 0;
    overflow: hidden;
    background: #fff;
}

/* page is scrolled, first row of icons is cut by the top */
.services {
    width: 1172px;
    margin: -12px 0 0 353px;
    display: grid;
    grid-template-columns: repeat(3, 390.5px);
    row-gap: 32px;
}
.service-icon {
    height: 66px;
    margin-bottom: 19px;
}
.service-icon svg {
    width: 70px;
    height: 66px;
    display: block;
    overflow: visible;
}
.ln {
    fill: none;
    stroke: #0b4477;
    stroke-width: 2.2;
}
.teeth {
    stroke-width: 3;
    stroke-dasharray: 3 3;
}
.service-title {
    display: inline-block;
    margin: 0;
    font-size: 17px;
    line-height: 22px;
    font-weight: 700;
    color: #333;
    padding-bottom: 5px;
    border-bottom: 3px solid #000;
}
.service-text {
    margin: 15px 0 0;
    width: 340px;
    font-size: 18px;
    font-weight: 300;
    line-height: 25px;
    color: #222;
    font-variant-numeric: oldstyle-nums;
    letter-spacing: .15px;
}
.read-more {
    display: flex;
    align-items: center;
    margin: 55px 0 76px 853px;
    height: 30px;
    font-size: 26.5px;
    font-weight: 300;
    color: #fbd010;
    white-space: nowrap;
}
.read-line {
    width: 90px;
    height: 1px;
    background: #fcd720;
    margin-left: 37px;
}

/* footer */
.footer {
    position: relative;
    height: 407px;
    background: #00234f;
    color: #fff;
    overflow: hidden;
}
.footer-bg {
    position: absolute;
    left: 0;
    top: 0;
    width: 100%;
    height: 100%;
}
.footer-inner {
    position: relative;
    padding: 89px 0 0 353px;
}
.logo {
    font-size: 48px;
    line-height: 48px;
    font-weight: 900;
    letter-spacing: .7px;
    padding-left: 3px;
}
.footer-cols {
    display: grid;
    grid-template-columns: 488px 195px 195px 263px;
    margin-top: 20.5px;
}
.footer-head {
    margin: 0;
    font-size: 21px;
    line-height: 26px;
    font-weight: 500;
}
.contact-grid {
    display: flex;
    margin-top: 45px;
    font-size: 18px;
    font-weight: 300;
    line-height: 30px;
    font-variant-numeric: oldstyle-nums;
}
.contact-col p {
    margin: 0;
    white-space: nowrap;
}
.c1 { width: 148px; letter-spacing: .5px; }
.c2 { width: 164px; letter-spacing: 1px; }
.c3 { letter-spacing: -.15px; }
.ci {
    display: block;
    height: 22px;
    margin-bottom: 5px;
}
.ci-pin { width: 15px; }
.ci-mail { width: 26px; height: 20px; margin: 1px 0 6px; }
.ci-phone { width: 20px; height: 24px; margin: -2px 0 5px; }
.socials {
    display: flex;
    gap: 13px;
    margin-top: 27px;
}
.social {
    width: 40px;
    height: 40px;
    border-radius: 50%;
    background: #fff;
    display: flex;
    align-items: center;
    justify-content: center;
}
.social svg {
    width: 19px;
    height: 19px;
    fill: #002e5f;
}
.footer-list {
    list-style: none;
    margin: 25px 0 0;
    padding: 0;
    font-size: 18px;
    font-weight: 300;
    line-height: 32px;
    font-variant-numeric: oldstyle-nums;
    white-space: nowrap;
}
.muted {
    color: #8d97a6;
}
.email {
    display: block;
    width: 263px;
    height: 40px;
    margin-top: 31px;
    padding: 0 16px;
    border: 0;
    border-radius: 10px;
    background: #fdf4f4;
    font-family: inherit;
    font-size: 17px;
    font-weight: 300;
}
.email::placeholder {
    color: #8f8f8f;
}
.send {
    display: block;
    width: 160px;
    height: 48px;
    margin-top: 20px;
    border: 0;
    border-radius: 10px;
    background: #fcd720;
    color: #fff;
    font-family: inherit;
    font-size: 16px;
    font-weight: 700;
}

/* scrollbar of the page */
.scrollbar {
    width: 15px;
    flex: none;
    position: relative;
    background: #f1f1f1;
}
.sb-thumb {
    position: absolute;
    left: 1px;
    right: 1px;
    top: 321px;
    height: 537px;
    background: #c1c1c1;
}
.sb-up,
.sb-down {
    position: absolute;
    left: 4px;
    width: 0;
    height: 0;
    border-left: 4px solid transparent;
    border-right: 4px solid transparent;
}
.sb-up {
    top: 6px;
    border-bottom: 5px solid #505050;
}
.sb-down {
    bottom: 6px;
    border-top: 5px solid #505050;
}
```
